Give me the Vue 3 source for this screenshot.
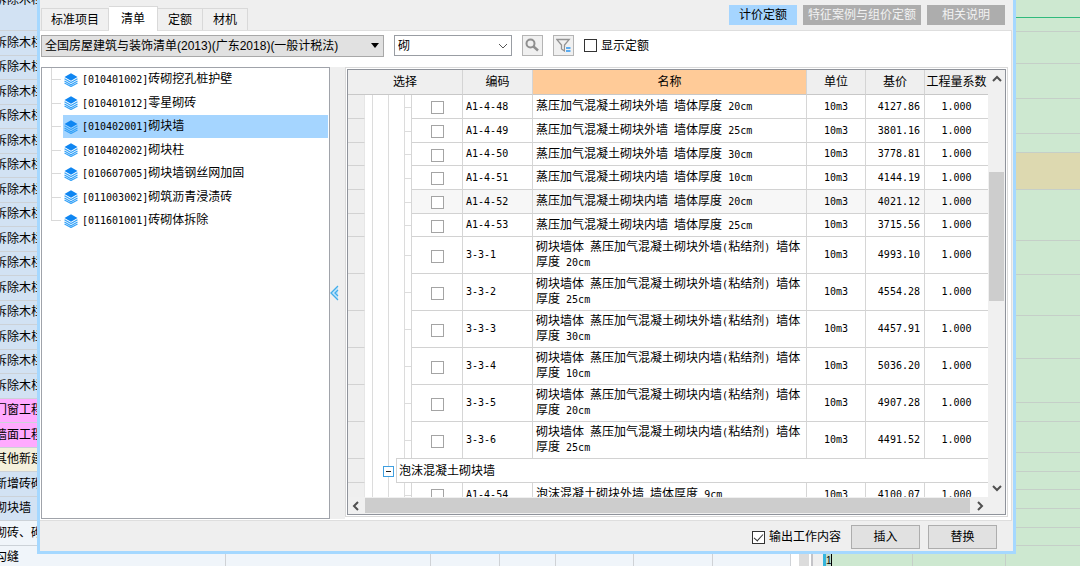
<script setup>
import { ref } from 'vue'

const tabs = ['标准项目', '清单', '定额', '材机']
const activeTab = ref('清单')
const keyword = ref('砌')
const showQuota = ref(false)
const outputWork = ref(true)

const items = [
  '[010401002]砖砌挖孔桩护壁',
  '[010401012]零星砌砖',
  '[010402001]砌块墙',
  '[010402002]砌块柱',
  '[010607005]砌块墙钢丝网加固',
  '[011003002]砌筑沥青浸渍砖',
  '[011601001]砖砌体拆除'
]
const activeItem = ref(2)

const outer = '蒸压加气混凝土砌块外墙'
const inner = '蒸压加气混凝土砌块内墙'
const rows = [
  { code: 'A1-4-48', name: `${outer} 墙体厚度 20cm`, price: '4127.86' },
  { code: 'A1-4-49', name: `${outer} 墙体厚度 25cm`, price: '3801.16' },
  { code: 'A1-4-50', name: `${outer} 墙体厚度 30cm`, price: '3778.81' },
  { code: 'A1-4-51', name: `${inner} 墙体厚度 10cm`, price: '4144.19' },
  { code: 'A1-4-52', name: `${inner} 墙体厚度 20cm`, price: '4021.12', hot: true },
  { code: 'A1-4-53', name: `${inner} 墙体厚度 25cm`, price: '3715.56' },
  { code: '3-3-1', name: `砌块墙体 ${outer}(粘结剂) 墙体厚度 20cm`, price: '4993.10', tall: true },
  { code: '3-3-2', name: `砌块墙体 ${outer}(粘结剂) 墙体厚度 25cm`, price: '4554.28', tall: true },
  { code: '3-3-3', name: `砌块墙体 ${outer}(粘结剂) 墙体厚度 30cm`, price: '4457.91', tall: true },
  { code: '3-3-4', name: `砌块墙体 ${inner}(粘结剂) 墙体厚度 10cm`, price: '5036.20', tall: true },
  { code: '3-3-5', name: `砌块墙体 ${inner}(粘结剂) 墙体厚度 20cm`, price: '4907.28', tall: true },
  { code: '3-3-6', name: `砌块墙体 ${inner}(粘结剂) 墙体厚度 25cm`, price: '4491.52', tall: true },
  { group: '泡沫混凝土砌块墙' },
  { code: 'A1-4-54', name: '泡沫混凝土砌块外墙 墙体厚度 9cm', price: '4100.07' }
]

// Splits a mixed string so that half-width characters can use the monospaced face;
// 厚度 is kept as a word of its own.
const runs = (text) =>
  text
    .match(/[\x20-\x7e]+|厚度|[^\x20-\x7e]+?(?=厚度|[\x20-\x7e]|$)/g)
    .map((t) => ({ t, half: /^[\x20-\x7e]/.test(t) }))

const sheet = [
  ...Array.from({ length: 15 }, () => ({ t: '拆除木栏杆', c: 'blue' })),
  { t: '门窗工程', c: 'pink' },
  { t: '墙面工程', c: 'pink' },
  { t: '其他新建', c: 'sand' },
  { t: '新增砖砌体', c: 'blue' },
  { t: '砌块墙', c: 'blue' },
  { t: '砌砖、砌块', c: 'pale' },
  { t: '勾缝', c: 'pale' }
]
const bands = [18, 14, 32, 35, 35, 19, 37, 51, 34, 41, 43, 44, 19, 31, 19, 18, 19, 19, 18, 21]
const footCells = [226, 205, 69, 56, 78, 79, 78]
</script>

<template>
  <div class="desktop">
    <div class="sheet">
      <div class="sheet-top">拆除木栏杆</div>
      <div v-for="(r, i) in sheet" :key="i" class="sheet-row" :class="r.c">{{ r.t }}</div>
    </div>
    <div class="bands">
      <div
        v-for="(h, i) in bands"
        :key="i"
        class="band"
        :class="{ first: i === 0, tan: i === 6 }"
        :style="{ height: h + 'px' }"
      ></div>
    </div>
    <div class="under">
      <div v-for="(w, i) in footCells" :key="i" class="under-cell" :style="{ width: w + 'px' }"></div>
      <div class="under-scroll"></div>
      <div class="under-gap"></div>
      <div class="under-mark">1</div>
      <div class="under-green a"></div>
      <div class="under-green b"></div>
      <div class="under-green c"></div>
    </div>

    <main class="dialog">
      <header class="head">
        <nav class="tabs">
          <button
            v-for="t in tabs"
            :key="t"
            type="button"
            class="tab"
            :class="{ on: t === activeTab }"
            @click="activeTab = t"
          >{{ t }}</button>
        </nav>
        <div class="modes">
          <button type="button" class="mode on">计价定额</button>
          <button type="button" class="mode tight">特征案例与组价定额</button>
          <button type="button" class="mode">相关说明</button>
        </div>
      </header>

      <section class="panel">
        <div class="tools">
          <div class="lib">
            <select class="lib-select" aria-label="清单库">
              <option>全国房屋建筑与装饰清单(2013)(广东2018)(一般计税法)</option>
            </select>
            <svg class="lib-arrow" width="8" height="5" viewBox="0 0 8 5"><path d="M0 0h8L4 5z" fill="#000" /></svg>
          </div>
          <div class="find">
            <input v-model="keyword" class="find-input" type="text" aria-label="关键字" />
            <svg width="10" height="6" viewBox="0 0 10 6"><path d="M1 1l4 4 4-4" fill="none" stroke="#555" /></svg>
          </div>
          <button type="button" class="tool" aria-label="查找">
            <svg width="15" height="15" viewBox="0 0 15 15">
              <circle cx="5.500" cy="5.500" r="4" fill="none" stroke="#8f8f8f" stroke-width="2" />
              <path d="M8.500 8.500l4.500 4" stroke="#8f8f8f" stroke-width="2.500" />
            </svg>
          </button>
          <button type="button" class="tool" aria-label="筛选">
            <svg width="15" height="15" viewBox="0 0 15 15">
              <path d="M0.800 1.500h12.400L8.500 7v6L5.500 11V7z" fill="none" stroke="#939393" stroke-width="1.300" />
              <path d="M9 9h6v5H9z" fill="#f0f0f0" />
              <path d="M10 10h4.500M10 13h4.500" stroke="#2b95f0" stroke-width="1.300" />
            </svg>
          </button>
          <label class="check dark"><input v-model="showQuota" type="checkbox" class="box" />显示定额</label>
        </div>

        <div class="body">
          <ul class="tree">
            <li v-for="(it, i) in items" :key="it" class="node">
              <button type="button" class="leaf" :class="{ on: i === activeItem }" @click="activeItem = i">
                <svg width="14" height="14" viewBox="0 0 14 14">
                  <path d="M7 0.300L13.500 4 7 7.800 0.500 4z" fill="#0f86f2" />
                  <path d="M0.500 5.800L7 9.500l6.500-3.700M0.500 8L7 11.700 13.500 8M0.500 10L7 13.500 13.500 10" fill="none" stroke="#35a2f8" stroke-width="1.200" />
                </svg>
                <span class="leaf-text"><span v-for="(r, k) in runs(it)" :key="k" :class="{ half: r.half }">{{ r.t }}</span></span>
              </button>
            </li>
          </ul>

          <button type="button" class="splitter" aria-label="收起">
            <svg width="9" height="16" viewBox="0 0 9 16">
              <path d="M8 1L1 8l7 7z" fill="#c4e6fb" />
              <path d="M8 1L1 8l7 7M8 5L5 8l3 3" fill="none" stroke="#42adea" stroke-width="1.300" />
            </svg>
          </button>

          <div class="frame">
            <div class="grid">
              <div class="view">
                <table class="table">
                  <colgroup>
                    <col class="c-mark" /><col class="c-tree" /><col class="c-box" /><col class="c-code" />
                    <col /><col class="c-unit" /><col class="c-unit" /><col class="c-rate" />
                  </colgroup>
                  <thead>
                    <tr>
                      <th colspan="3">选择</th>
                      <th>编码</th>
                      <th class="sorted">名称</th>
                      <th>单位</th>
                      <th>基价</th>
                      <th>工程量系数</th>
                    </tr>
                  </thead>
                  <tbody>
                    <tr v-for="(r, i) in rows" :key="i" :class="{ tall: r.tall, hot: r.hot }">
                      <td class="mark"></td>
                      <template v-if="r.group">
                        <td class="group" colspan="7">
                          <div class="group-in">
                            <button type="button" class="fold" aria-label="折叠"></button>
                            <span class="group-name">{{ r.group }}</span>
                          </div>
                        </td>
                      </template>
                      <template v-else>
                        <td class="lines"></td>
                        <td class="pick"><input type="checkbox" class="box" :aria-label="r.code" /></td>
                        <td class="half code">{{ r.code }}</td>
                        <td class="name"><span v-for="(s, k) in runs(r.name)" :key="k" :class="{ half: s.half }">{{ s.t }}</span></td>
                        <td class="half mid">10m3</td>
                        <td class="half num">{{ r.price }}</td>
                        <td class="half mid last">1.000</td>
                      </template>
                    </tr>
                  </tbody>
                </table>
              </div>
              <div class="vbar">
                <svg width="10" height="18" viewBox="0 0 10 18"><path d="M1 11l4-4 4 4" fill="none" stroke="#505050" stroke-width="2" /></svg>
                <div class="vtrack"><div class="vthumb"></div></div>
                <svg width="10" height="18" viewBox="0 0 10 18"><path d="M1 7l4 4 4-4" fill="none" stroke="#505050" stroke-width="2" /></svg>
              </div>
              <div class="hbar">
                <svg width="17" height="14" viewBox="0 0 17 14"><path d="M10 3L6 7l4 4" fill="none" stroke="#505050" stroke-width="2" /></svg>
                <div class="hthumb"></div>
                <svg width="18" height="14" viewBox="0 0 18 14"><path d="M8 3l4 4-4 4" fill="none" stroke="#505050" stroke-width="2" /></svg>
              </div>
              <div class="corner"></div>
            </div>
          </div>
        </div>
      </section>

      <footer class="foot">
        <label class="check dark"><input v-model="outputWork" type="checkbox" class="box" />输出工作内容</label>
        <button type="button" class="push">插入</button>
        <button type="button" class="push">替换</button>
      </footer>
    </main>
  </div>
</template>

<style>
body {
  margin: 0;
}
</style>

<style scoped>
.desktop {
  position: relative;
  height: 100vh;
  overflow: hidden;
  background: #f0f5fa;
  color: #000;
  font: 12px/14px "Liberation Sans", "Noto Sans CJK SC", sans-serif;
}
.desktop * {
  box-sizing: border-box;
}
button,
input,
select {
  margin: 0;
  padding: 0;
  border: 0;
  border-radius: 0;
  color: inherit;
  font: inherit;
}
svg {
  display: block;
  flex: none;
}
.half {
  font-family: "DejaVu Sans Mono", monospace;
  font-size: 10px;
}

/* spreadsheet behind the dialog */
.sheet {
  display: flex;
  flex-direction: column;
  width: 40px;
  height: calc(100% + 4px);
}
.sheet-top,
.sheet-row {
  display: flex;
  align-items: center;
  overflow: hidden;
  border-bottom: 1px solid #ccd2d8;
  text-indent: -5px;
  white-space: nowrap;
}
.sheet-row {
  flex: 1 1 0;
}
.sheet-top {
  flex: none;
  height: 31px;
  align-items: flex-start;
  line-height: 0;
  background: #d2e2f3;
}
.blue {
  background: #d2e2f3;
}
.pink {
  background: #ffaaff;
}
.sand {
  background: #f4f0dc;
}
.pale {
  background: #f0f5fa;
}
.bands {
  position: absolute;
  top: 0;
  right: 0;
  bottom: 0;
  width: 68px;
  overflow: hidden;
  background: #cde8d0;
}
.band {
  box-sizing: border-box;
  border-bottom: 1px solid #c5cfc8;
}
.band.first {
  border-bottom-color: #2fba7c;
}
.band.tan {
  background: #ddd9b0;
}
.under {
  position: absolute;
  right: 0;
  bottom: 0;
  left: 0;
  display: flex;
  height: 12px;
}
.under-cell {
  border-right: 1px solid #cfd2d6;
}
.under-scroll {
  width: 22px;
  border-right: 2px solid #c4c4c8;
  background: linear-gradient(90deg, #fff 8px, #dcdcdc 8px, #dcdcdc 18px, #fff 18px);
}
.under-gap {
  width: 10px;
  background: #efefef;
}
.under-mark {
  width: 9px;
  border-right: 1px solid #000;
  border-left: 3px solid #35b5dc;
  background: #c3dccb;
  font-size: 10px;
}
.under-green {
  border-right: 1px solid #c5cfc8;
  background: #cde8d0;
}
.under-green.a {
  width: 81px;
}
.under-green.b {
  width: 93px;
}
.under-green.c {
  flex: 1;
  border-right: 0;
}

/* dialog window */
.dialog {
  position: absolute;
  top: 0;
  right: 64px;
  bottom: 12px;
  left: 37px;
  display: flex;
  flex-direction: column;
  border: 3px solid #a5d8ff;
  border-top: 0;
  background: #efefef;
}
.head {
  display: flex;
  flex: none;
  justify-content: space-between;
  height: 30px;
  padding: 0 8px 0 1px;
}
.tabs {
  display: flex;
  align-items: flex-end;
}
.tab {
  height: 22px;
  padding: 0 10px;
  border: 1px solid #d9d9d9;
  border-bottom: 0;
  border-left: 0;
  background: #f0f0f0;
}
.tab:first-child {
  padding: 0 9px;
  border-left: 1px solid #d9d9d9;
}
.tab.on {
  position: relative;
  z-index: 1;
  height: 25px;
  margin-bottom: -1px;
  padding: 0 12px;
  background: #fff;
}
.modes {
  display: flex;
  gap: 6px;
  padding-top: 5px;
}
.mode {
  height: 20px;
  padding: 0 15px;
  background: #adadad;
  color: #f2f2f2;
}
.mode.tight {
  padding: 0 5px;
}
.mode.on {
  padding: 0 10px;
  background: #a5d5ff;
  color: #000;
}
.panel {
  display: flex;
  flex: 1;
  flex-direction: column;
  min-height: 0;
  margin-right: 1px;
  padding: 0 3px 1px 1px;
  border: 1px solid #dedede;
  border-left: 0;
  background: #fff;
}
.tools {
  display: flex;
  flex: none;
  align-items: center;
  gap: 10px;
  height: 36px;
  padding-bottom: 7px;
}
.lib {
  position: relative;
  width: 343px;
}
.lib-select {
  display: block;
  width: 100%;
  height: 22px;
  padding: 0 20px 0 3px;
  border: 1px solid #a8a8a8;
  background: #e1e1e1;
  appearance: none;
}
.lib-arrow {
  position: absolute;
  top: 8px;
  right: 5px;
}
.find {
  display: flex;
  align-items: center;
  width: 118px;
  height: 21px;
  padding: 0 3px;
  border: 1px solid #999da3;
}
.find-input {
  flex: 1;
  width: 0;
  outline: 0;
  background: none;
}
.tool {
  display: grid;
  place-items: center;
  width: 21px;
  height: 21px;
  border: 1px solid #b4b4b4;
  background: #f0f0f0;
}
.check {
  display: flex;
  align-items: center;
  gap: 4px;
}
.box {
  display: block;
  width: 13px;
  height: 13px;
  border: 1px solid #a4a4a4;
  background: #fff;
  appearance: none;
}
.dark .box {
  border-color: #333;
}
.foot .box:checked::after {
  display: block;
  width: 4px;
  height: 8px;
  margin: 0 auto;
  border: solid #333;
  border-width: 0 1px 1px 0;
  transform: rotate(42deg);
  content: "";
}
.body {
  display: flex;
  flex: 1;
  min-height: 0;
}

/* item tree */
.tree {
  flex: none;
  width: 289px;
  margin: 0;
  padding: 0 1px 0 9px;
  border: 1px solid #a0a3aa;
  list-style: none;
}
.node {
  display: flex;
  height: 23px;
  padding-left: 12px;
  background:
    linear-gradient(#d9d9d9, #d9d9d9) 0 0 / 1px 100% no-repeat,
    linear-gradient(#d9d9d9, #d9d9d9) 0 50% / 10px 1px no-repeat;
}
.node:nth-child(even) {
  height: 24px;
}
.node:last-child {
  background:
    linear-gradient(#d9d9d9, #d9d9d9) 0 0 / 1px 50% no-repeat,
    linear-gradient(#d9d9d9, #d9d9d9) 0 50% / 10px 1px no-repeat;
}
.leaf {
  display: flex;
  flex: 1;
  align-items: center;
  gap: 4px;
  padding-left: 1px;
  background: none;
  text-align: left;
  white-space: nowrap;
}
.leaf.on {
  background: #a5d5ff;
}
.splitter {
  flex: none;
  width: 15px;
  background: #efefef;
}

/* quota table */
.frame {
  display: flex;
  flex: 1;
  min-width: 0;
  margin-bottom: 2px;
  padding: 1px;
  border: 1px solid #dadada;
}
.grid {
  display: grid;
  flex: 1;
  grid-template-columns: minmax(0, 1fr) 17px;
  grid-template-rows: minmax(0, 1fr) 17px;
  min-width: 0;
  border: 1px solid #8f939b;
}
.view {
  overflow: hidden;
}
.table {
  width: 100%;
  border-spacing: 0;
  table-layout: fixed;
}
.c-mark {
  width: 17px;
}
.c-tree {
  width: 47px;
}
.c-box {
  width: 51px;
}
.c-code {
  width: 70px;
}
.c-unit {
  width: 59px;
}
.c-rate {
  width: 63px;
}
th {
  height: 25px;
  padding: 0;
  border-right: 1px solid #d4d4d4;
  border-bottom: 1px solid #c8c8c8;
  background: #efefef;
  font-weight: 400;
  white-space: nowrap;
}
th:last-child {
  border-right: 0;
}
th.sorted {
  background: #ffcb98;
}
tbody tr {
  height: 24px;
}
tbody tr:nth-child(3n) {
  height: 23px;
}
tbody tr.tall {
  height: 37px;
}
td {
  padding: 0 2px;
  border-right: 1px solid #d6d6d6;
  border-bottom: 1px solid #d2d2d2;
}
td.last {
  border-right: 0;
}
td.mark {
  border-right-color: #e6e6e6;
  background: #efefef;
}
td.code {
  padding-left: 3px;
}
td.lines {
  border-bottom: 0;
  background:
    linear-gradient(#dcdcdc, #dcdcdc) 7px 0 / 1px 100% no-repeat,
    linear-gradient(#dcdcdc, #dcdcdc) 23px 0 / 1px 100% no-repeat,
    linear-gradient(#dcdcdc, #dcdcdc) 39px 0 / 1px 100% no-repeat,
    linear-gradient(#dcdcdc, #dcdcdc) 39px 50% / 8px 1px no-repeat;
}
.pick .box {
  margin: 2px auto 0;
}
.hot td:not(.mark):not(.lines) {
  background: #f7f7f7;
}
td.name {
  padding: 0 0 0 3px;
}
td.mid {
  text-align: center;
}
td.num {
  padding-right: 4px;
  text-align: right;
}
td.group {
  padding: 0;
  border: 0;
  background:
    linear-gradient(#dcdcdc, #dcdcdc) 7px 0 / 1px 100% no-repeat,
    linear-gradient(#dcdcdc, #dcdcdc) 23px 0 / 1px 100% no-repeat;
}
.group-in {
  display: flex;
  align-items: center;
  height: 24px;
  padding-left: 18px;
}
.fold {
  width: 11px;
  height: 11px;
  margin-right: 2px;
  border: 1px solid #3f9fe0;
  background: linear-gradient(#222, #222) center / 5px 1px no-repeat #fff;
}
.group-name {
  display: flex;
  flex: 1;
  align-items: center;
  height: 25px;
  margin-top: -1px;
  padding-left: 2px;
  border: 1px solid #d2d2d2;
  border-right: 0;
}
.vbar {
  display: flex;
  flex-direction: column;
  align-items: center;
  background: #f0f0f0;
}
.vtrack {
  flex: 1;
  align-self: stretch;
  margin: 0 1px;
}
.vthumb {
  height: 33%;
  margin-top: 84px;
  background: #cdcdcd;
}
.hbar {
  display: flex;
  align-items: center;
  background: #f0f0f0;
}
.hthumb {
  flex: 1;
  align-self: stretch;
  margin: 1px 0;
  background: #cdcdcd;
}
.corner {
  background: #f0f0f0;
}

.foot {
  display: flex;
  flex: none;
  align-items: center;
  justify-content: flex-end;
  gap: 8px;
  height: 30px;
  padding: 2px 16px 0 0;
}
.push {
  width: 69px;
  height: 24px;
  border: 1px solid #adadad;
  background: #e1e1e1;
}
.foot .check {
  margin-right: 2px;
}
</style>
